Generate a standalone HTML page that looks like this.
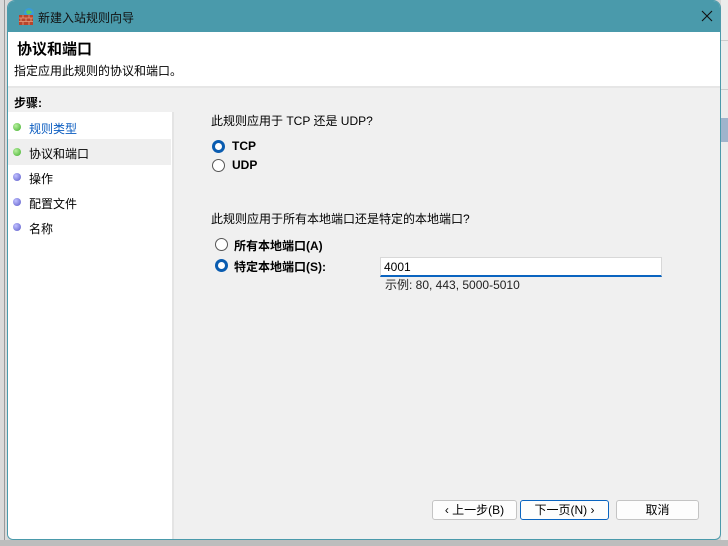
<!DOCTYPE html>
<html><head><meta charset="utf-8"><style>
*{margin:0;padding:0;box-sizing:border-box}
body{width:728px;height:546px;overflow:hidden;background:#d6d6d6;position:relative;font-family:"Liberation Sans","Microsoft YaHei","Noto Sans CJK SC",sans-serif;font-size:12px;color:#000}
.abs{position:absolute}
.win{left:7px;top:0;width:714px;height:540px;background:#f0f0f0;border:1px solid #4a9aab;border-radius:8px 8px 6px 6px;overflow:hidden}
.title{left:0;top:0;width:100%;height:31px;background:#4a9aab}
.hdr{left:0;top:31px;width:100%;height:56px;background:#fff;border-bottom:2px solid #e6e6e6}
.left{left:0;top:89px;width:166px;height:452px;background:#fff;border-right:2px solid #e4e4e4}
.dot{width:8px;height:8px;border-radius:50%}
.g{background:radial-gradient(circle at 35% 35%,#b8f0a0,#3fae2a)}
.b{background:radial-gradient(circle at 35% 35%,#c0c0ff,#5a5ac8)}
.radio{width:13px;height:13px;border-radius:50%;border:1px solid #555;background:#fff}
.radio.on{border:3.5px solid #0a5cb0;background:#fff}
.btn{height:20px;border:1px solid #c4c4c4;border-radius:3px;background:#fdfdfd;text-align:center;line-height:18px;font-size:12px}
</style></head><body>
<div class="abs" style="left:0;top:0;width:7px;height:546px;background:#dadada"></div>
<div class="abs" style="left:4px;top:0;width:1px;height:546px;background:#9a9a9a"></div>
<div class="abs" style="left:721px;top:0;width:7px;height:546px;background:#ececec"></div>
<div class="abs" style="left:721px;top:40px;width:7px;height:1px;background:#ccc"></div>
<div class="abs" style="left:721px;top:89px;width:7px;height:1px;background:#ccc"></div>
<div class="abs" style="left:721px;top:118px;width:7px;height:24px;background:#9fb4cc"></div>
<div class="abs" style="left:0;top:540px;width:728px;height:6px;background:#bdbdbd"></div>
<div class="abs win">
 <div class="abs title">
  <svg class="abs" style="left:10px;top:6px" width="18" height="18" viewBox="0 0 18 18"><circle cx="11" cy="6" r="5" fill="#3a9bd8"/><path d="M8 4 Q11 2 14 5 Q12 8 9 7Z" fill="#5cc45c"/><rect x="1" y="8" width="14" height="10" fill="#b8452c"/><path d="M1 11H15M1 14.5H15M5 8V11M11 8V11M3 11V14.5M8 11V14.5M13 11V14.5M5 14.5V18M11 14.5V18" stroke="#e8a080" stroke-width="0.8"/></svg>
  <div class="abs" style="left:30px;top:8px;font-size:12px;color:#111">新建入站规则向导</div>
  <svg class="abs" style="left:693px;top:9px" width="12" height="12" viewBox="0 0 12 12"><path d="M1 1L11 11M11 1L1 11" stroke="#111" stroke-width="1.1"/></svg>
 </div>
 <div class="abs hdr">
  <div class="abs" style="left:9px;top:6px;font-size:15px;font-weight:bold">协议和端口</div>
  <div class="abs" style="left:6px;top:30px">指定应用此规则的协议和端口。</div>
 </div>
 <div class="abs left">
  <div class="abs" style="left:0;top:0;width:166px;height:22px;background:#f0f0f0"></div>
  <div class="abs" style="left:6px;top:4px;font-weight:bold">步骤:</div>
  <div class="abs" style="left:0;top:49px;width:163px;height:26px;background:#efefef"></div>
  <div class="abs dot g" style="left:5px;top:33px"></div><div class="abs" style="left:21px;top:30px;color:#0a5cc0">规则类型</div>
  <div class="abs dot g" style="left:5px;top:58px"></div><div class="abs" style="left:21px;top:55px">协议和端口</div>
  <div class="abs dot b" style="left:5px;top:83px"></div><div class="abs" style="left:21px;top:80px">操作</div>
  <div class="abs dot b" style="left:5px;top:108px"></div><div class="abs" style="left:21px;top:105px">配置文件</div>
  <div class="abs dot b" style="left:5px;top:133px"></div><div class="abs" style="left:21px;top:130px">名称</div>
 </div>
 <div class="abs" style="left:203px;top:111px">此规则应用于 TCP 还是 UDP?</div>
 <div class="abs radio on" style="left:204px;top:139px"></div><div class="abs" style="left:224px;top:138px;font-weight:bold">TCP</div>
 <div class="abs radio" style="left:204px;top:158px"></div><div class="abs" style="left:224px;top:157px;font-weight:bold">UDP</div>
 <div class="abs" style="left:203px;top:209px">此规则应用于所有本地端口还是特定的本地端口?</div>
 <div class="abs radio" style="left:207px;top:237px"></div><div class="abs" style="left:226px;top:236px;font-weight:bold">所有本地端口(A)</div>
 <div class="abs radio on" style="left:207px;top:258px"></div><div class="abs" style="left:226px;top:257px;font-weight:bold">特定本地端口(S):</div>
 <div class="abs" style="left:372px;top:256px;width:282px;height:20px;background:#fff;border:1px solid #d8d8d8;border-bottom:2px solid #0a64c0;padding:2px 3px">4001</div>
 <div class="abs" style="left:377px;top:275px;color:#222">示例: 80, 443, 5000-5010</div>
 <div class="abs btn" style="left:424px;top:499px;width:85px">‹ 上一步(B)</div>
 <div class="abs btn" style="left:512px;top:499px;width:89px;border-color:#0a64c0">下一页(N) ›</div>
 <div class="abs btn" style="left:608px;top:499px;width:83px">取消</div>
</div>
</body></html>
